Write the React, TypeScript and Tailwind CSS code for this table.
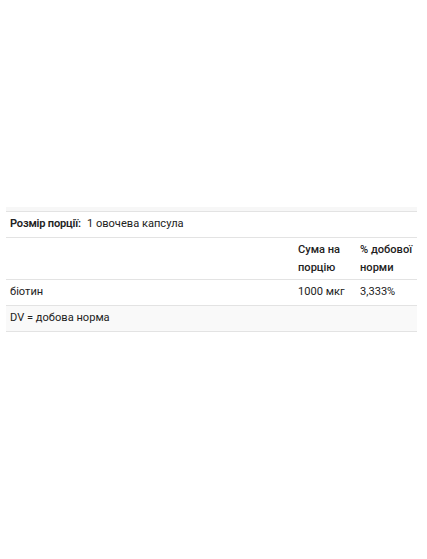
const rows = [
  { name: "біотин", amount: "1000 мкг", dv: "3,333%" },
];

const App = () => {
  return (
    <div className="min-h-[559px] bg-white pt-[207px] pl-[6px] pr-[10px] font-['Roboto','Liberation_Sans','Noto_Sans_CJK_SC',sans-serif] text-[11.1px] text-[#222]">
      <div className="h-[4px] bg-[#f7f7f7]"></div>

      {/* Serving size */}
      <div className="border-t border-[#e3e3e3] h-[26px] flex items-center px-1">
        <span className="font-semibold tracking-[-0.2px]">Розмір порції:</span>
        <span className="ml-[6px]">1 овочева капсула</span>
      </div>

      {/* Header */}
      <div className="border-t border-[#e3e3e3] h-[42px] grid grid-cols-[288px_62px_1fr] items-center leading-[18px] font-medium">
        <div></div>
        <div className="pl-1">Сума на<br />порцію</div>
        <div className="pl-1 whitespace-nowrap">% добової<br />норми</div>
      </div>

      {rows.map((row, i) => (
        <div key={i} className="border-t border-[#e3e3e3] h-[26px] grid grid-cols-[288px_62px_1fr] items-center">
          <div className="pl-1">{row.name}</div>
          <div className="pl-1 whitespace-nowrap">{row.amount}</div>
          <div className="pl-1">{row.dv}</div>
        </div>
      ))}

      <div className="border-t border-b border-[#e3e3e3] h-[27px] flex items-center px-1 bg-[#f9f9f9]">
        DV = добова норма
      </div>
    </div>
  );
};

export default App;
